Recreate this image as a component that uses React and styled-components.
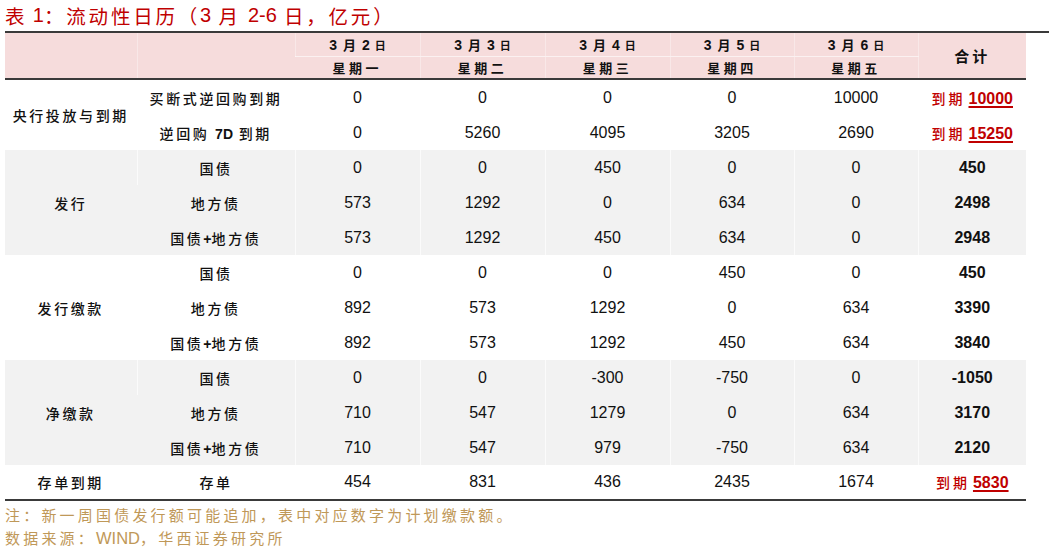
import React from "react";
import styled, { createGlobalStyle } from "styled-components";

const Global = createGlobalStyle`
  html, body { margin: 0; padding: 0; background: #fff; }
  body { font-family: "Liberation Sans", "Noto Sans CJK SC", sans-serif; }
`;

const CJK = `"Noto Sans CJK SC", sans-serif`;
const NUM = `"Liberation Sans", Arial, sans-serif`;

const Page = styled.div`
  width: 1054px;
  height: 552px;
  overflow: hidden;
  padding-left: 5px;
  box-sizing: border-box;
`;

const Title = styled.div`
  height: 31px;
  display: flex;
  align-items: center;
  color: #c00000;
  font-family: ${CJK};
  font-size: 19.5px;
  letter-spacing: 2.8px;
  white-space: nowrap;
  box-sizing: border-box;
`;

const Num = styled.span`
  font-family: ${NUM};
  letter-spacing: 0;
  font-size: ${(p) => p.$size || "inherit"};
  font-weight: ${(p) => (p.$bold ? 700 : "inherit")};
`;

const TopRule = styled.div`
  width: 1044px;
  height: 2px;
  background: #3a3a3a;
`;

const Table = styled.table`
  width: 1021px;
  border-collapse: collapse;
  table-layout: fixed;
  border-bottom: 2px solid #3a3a3a;
`;

const HeadRow = styled.tr`
  background: #f6dcdc;
  height: 23px;
`;

const Th = styled.th`
  padding: 0;
  font-weight: 700;
  color: #111;
  text-align: center;
  vertical-align: middle;
  font-family: ${CJK};
  font-size: ${(p) => p.$size || "13px"};
  letter-spacing: ${(p) => p.$ls || "3.5px"};
  white-space: nowrap;
  border-left: 1px solid rgba(255, 255, 255, 0.35);
  border-bottom: ${(p) => (p.$split ? "1px solid rgba(255,255,255,0.6)" : "none")};
  &:first-child { border-left: none; }
`;

const DateUnit = styled.span`
  font-size: ${(p) => p.$size};
  margin-left: ${(p) => p.$left};
  margin-right: ${(p) => p.$right};
`;

const HeadBottom = styled.tr`
  height: 0;
  & > td { padding: 0; border-top: 2px solid #3a3a3a; height: 0; }
`;

const Row = styled.tr`
  height: 35px;
  background: ${(p) => (p.$shade ? "#f2f2f2" : "#ffffff")};
`;

const Td = styled.td`
  padding: 0;
  text-align: center;
  vertical-align: middle;
  color: #111;
  white-space: nowrap;
  font-family: ${(p) => (p.$cjk ? CJK : NUM)};
  font-size: ${(p) => (p.$cjk ? "14px" : "16px")};
  letter-spacing: ${(p) => (p.$cjk ? "2.6px" : "0")};
  font-weight: ${(p) => (p.$bold ? 700 : p.$cjk ? 500 : 400)};
  border-left: 1px solid ${(p) => (p.$shadeLine ? "rgba(255,255,255,0.7)" : "transparent")};
  &:first-child { border-left: none; }
`;

const Due = styled.span`
  color: #c00000;
  font-family: ${CJK};
  font-size: 14px;
  font-weight: 500;
  letter-spacing: 3px;
`;

const DueNum = styled.span`
  color: #c00000;
  font-family: ${NUM};
  font-size: 16px;
  font-weight: 700;
  text-decoration: underline;
  text-decoration-thickness: 1.5px;
  text-underline-offset: 2px;
  letter-spacing: 0;
  margin-left: 3px;
`;

const Notes = styled.div`
  padding-top: 2px;
  color: #bf9858;
  font-family: ${CJK};
  font-size: 15px;
  letter-spacing: 3.2px;
  line-height: 23px;
  white-space: nowrap;
`;

const dates = [
  ["2", "一"],
  ["3", "二"],
  ["4", "三"],
  ["5", "四"],
  ["6", "五"],
];

const groups = [
  {
    label: "央行投放与到期",
    shade: false,
    rows: [
      { name: "买断式逆回购到期", vals: ["0", "0", "0", "0", "10000"], due: "10000" },
      { name: <>逆回购 <Num $bold>7D</Num> 到期</>, vals: ["0", "5260", "4095", "3205", "2690"], due: "15250" },
    ],
  },
  {
    label: "发行",
    shade: true,
    rows: [
      { name: "国债", vals: ["0", "0", "450", "0", "0"], total: "450" },
      { name: "地方债", vals: ["573", "1292", "0", "634", "0"], total: "2498" },
      { name: <>国债<Num $bold>+</Num>地方债</>, vals: ["573", "1292", "450", "634", "0"], total: "2948" },
    ],
  },
  {
    label: "发行缴款",
    shade: false,
    rows: [
      { name: "国债", vals: ["0", "0", "0", "450", "0"], total: "450" },
      { name: "地方债", vals: ["892", "573", "1292", "0", "634"], total: "3390" },
      { name: <>国债<Num $bold>+</Num>地方债</>, vals: ["892", "573", "1292", "450", "634"], total: "3840" },
    ],
  },
  {
    label: "净缴款",
    shade: true,
    rows: [
      { name: "国债", vals: ["0", "0", "-300", "-750", "0"], total: "-1050" },
      { name: "地方债", vals: ["710", "547", "1279", "0", "634"], total: "3170" },
      { name: <>国债<Num $bold>+</Num>地方债</>, vals: ["710", "547", "979", "-750", "634"], total: "2120" },
    ],
  },
  {
    label: "存单到期",
    shade: false,
    rows: [{ name: "存单", vals: ["454", "831", "436", "2435", "1674"], due: "5830" }],
  },
];

export default function App() {
  return (
    <Page>
      <Global />
      <Title>
        表 <Num $size="20px">&nbsp;1</Num>：流动性日历（<Num $size="20px">3</Num>&nbsp;月&nbsp;<Num $size="20px">2-6</Num>&nbsp;日，亿元）
      </Title>
      <TopRule />
      <Table>
        <colgroup>
          <col style={{ width: 132 }} />
          <col style={{ width: 158 }} />
          <col style={{ width: 125 }} />
          <col style={{ width: 125 }} />
          <col style={{ width: 125 }} />
          <col style={{ width: 124 }} />
          <col style={{ width: 124 }} />
          <col style={{ width: 108 }} />
        </colgroup>
        <thead>
          <HeadRow>
            <Th rowSpan={2} />
            <Th rowSpan={2} />
            {dates.map(([d]) => (
              <Th key={d} $split $ls="0">
                <Num $bold $size="14px">3</Num>
                <DateUnit $size="13px" $left="6px" $right="6px">月</DateUnit>
                <Num $bold $size="14px">{d}</Num>
                <DateUnit $size="11px" $left="5px" $right="0">日</DateUnit>
              </Th>
            ))}
            <Th rowSpan={2} $size="15px" $ls="3px">合计</Th>
          </HeadRow>
          <HeadRow>
            {dates.map(([d, w]) => (
              <Th key={d}>星期{w}</Th>
            ))}
          </HeadRow>
          <HeadBottom>
            <td colSpan={8} />
          </HeadBottom>
        </thead>
        <tbody>
          {groups.map((g) =>
            g.rows.map((r, i) => (
              <Row key={g.label + i} $shade={g.shade}>
                {i === 0 && (
                  <Td $cjk rowSpan={g.rows.length} $shadeLine={g.shade}>
                    {g.label}
                  </Td>
                )}
                <Td $cjk $shadeLine={g.shade}>{r.name}</Td>
                {r.vals.map((v, j) => (
                  <Td key={j} $shadeLine={g.shade}>{v}</Td>
                ))}
                <Td $bold $shadeLine={g.shade}>
                  {r.due ? (
                    <>
                      <Due>到期</Due>
                      <DueNum>{r.due}</DueNum>
                    </>
                  ) : (
                    r.total
                  )}
                </Td>
              </Row>
            ))
          )}
        </tbody>
      </Table>
      <Notes>
        <div>注：新一周国债发行额可能追加，表中对应数字为计划缴款额。</div>
        <div>
          数据来源：<Num $size="16.5px">WIND</Num>，华西证券研究所
        </div>
      </Notes>
    </Page>
  );
}
